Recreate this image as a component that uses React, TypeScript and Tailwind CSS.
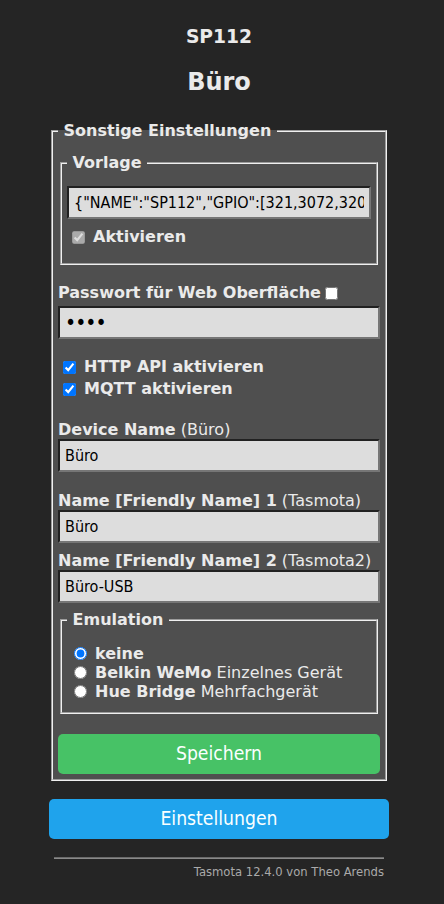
import type { ReactNode } from 'react'

const TEMPLATE =
  '{"NAME":"SP112","GPIO":[321,3072,320,0,2656,2720,0,0,2624,32,0,224,225,0],"FLAG":0,"BASE":18}'

function TextInput({ value, type = 'text' }: { value: string; type?: string }) {
  return (
    <input
      type={type}
      defaultValue={value}
      className={`block h-[33px] w-full border-2 border-[#767676] bg-[#dddddd] px-[5px] font-['DejaVu_Sans_Condensed','DejaVu_Sans',sans-serif] leading-[19px] text-black outline-none font-stretch-condensed [border-style:inset] ${
        type === 'password' ? 'text-[21px] tracking-[-1px]' : 'text-[16px]'
      }`}
    />
  )
}

function Group({
  title,
  className,
  children,
}: {
  title: string
  className: string
  children: ReactNode
}) {
  return (
    <fieldset
      className={`mx-[2px] border-2 border-[#f0f0f0] bg-[#4f4f4f] px-[5px] [border-style:groove] ${className}`}
    >
      <legend className="text-[16px] leading-[20px] font-bold">
        &nbsp;{title}&nbsp;
      </legend>
      {children}
    </fieldset>
  )
}

function Check({
  label,
  checked,
  disabled,
  className,
}: {
  label: string
  checked?: boolean
  disabled?: boolean
  className: string
}) {
  return (
    <label className={`flex items-center ${className}`}>
      <input
        type="checkbox"
        defaultChecked={checked}
        disabled={disabled}
        className="mr-[8px] size-[13px]"
      />
      <b>{label}</b>
    </label>
  )
}

function Radio({
  name,
  detail,
  checked,
}: {
  name: string
  detail?: string
  checked?: boolean
}) {
  return (
    <label className="flex h-[19px] items-center whitespace-nowrap">
      <input
        type="radio"
        name="emulation"
        defaultChecked={checked}
        className="mr-[8px] ml-[7px] size-[13px]"
      />
      <b>{name}</b>
      {detail && <span>&nbsp;{detail}</span>}
    </label>
  )
}

function Label({ bold, extra, className }: { bold: string; extra?: string; className: string }) {
  return (
    <div className={`flex h-[18px] items-center whitespace-nowrap ${className}`}>
      <b>{bold}</b>
      {extra && <span>&nbsp;({extra})</span>}
    </div>
  )
}

export default function App() {
  return (
    <div className="min-h-screen bg-[#252525] font-['DejaVu_Sans',sans-serif] text-[16px] text-[#eaeaea]">
      <div className="ml-[49px] w-[340px] pt-[26px] pb-[26px]">
        <h3 className="text-center text-[18.72px] leading-[22px] font-bold">SP112</h3>
        <h2 className="mt-[20px] text-center text-[24px] leading-[28px] font-bold">Büro</h2>

        <Group title="Sonstige Einstellungen" className="mt-[25px] pb-[5px]">
          <Group title="Vorlage" className="mt-[12px] pb-[16px]">
            <div className="mt-[13px]">
              <TextInput value={TEMPLATE} />
            </div>
            <Check label="Aktivieren" checked disabled className="mt-[8px] h-[20px] pl-[5px]" />
          </Group>

          <div className="mt-[18px] flex h-[20px] items-center whitespace-nowrap">
            <b>Passwort für Web Oberfläche</b>
            <input type="checkbox" className="ml-[4px] size-[13px]" />
          </div>
          <div className="mt-[3px]">
            <TextInput type="password" value="1234" />
          </div>

          <Check label="HTTP API aktivieren" checked className="mt-[17px] h-[22px] pl-[5px]" />
          <Check label="MQTT aktivieren" checked className="h-[22px] pl-[5px]" />

          <Label bold="Device Name" extra="Büro" className="mt-[21px]" />
          <TextInput value="Büro" />

          <Label bold="Name [Friendly Name] 1" extra="Tasmota" className="mt-[20px]" />
          <TextInput value="Büro" />

          <Label bold="Name [Friendly Name] 2" extra="Tasmota2" className="mt-[9px]" />
          <TextInput value="Büro-USB" />

          <Group title="Emulation" className="mt-[7px] pb-[11px]">
            <div className="mt-[14px]">
              <Radio name="keine" checked />
              <Radio name="Belkin WeMo" detail="Einzelnes Gerät" />
              <Radio name="Hue Bridge" detail="Mehrfachgerät" />
            </div>
          </Group>

          <button
            type="button"
            className="mt-[20px] block h-[40px] w-full rounded-[5px] bg-[#47c266] font-['DejaVu_Sans_Condensed','DejaVu_Sans',sans-serif] text-[19.2px] text-[#faffff] font-stretch-condensed"
          >
            Speichern
          </button>
        </Group>

        <button
          type="button"
          className="mt-[18px] block h-[40px] w-full rounded-[5px] bg-[#1fa3ec] font-['DejaVu_Sans_Condensed','DejaVu_Sans',sans-serif] text-[19.2px] text-[#faffff] font-stretch-condensed"
        >
          Einstellungen
        </button>

        <div className="px-[5px] text-right text-[11.6px] text-[#aaaaaa]">
          <div className="mt-[18px] h-[2px] border-t border-b border-t-[#6a6a6a] border-b-[#8a8a8a]" />
          <div className="mt-[6px] leading-[14px]">Tasmota 12.4.0 von Theo Arends</div>
        </div>
      </div>
    </div>
  )
}
